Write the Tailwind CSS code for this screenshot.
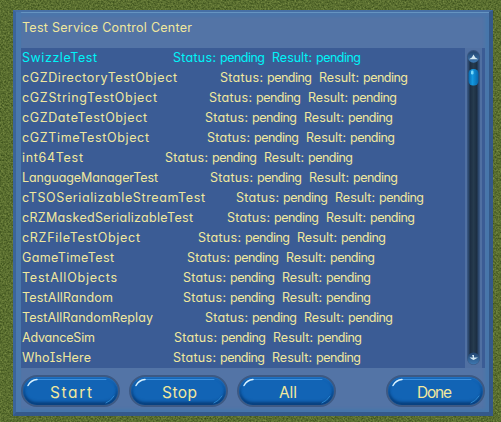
<!DOCTYPE html>
<html lang="en">
<head>
<meta charset="utf-8">
<title>Test Service Control Center</title>
<script src="https://cdn.jsdelivr.net/npm/@tailwindcss/browser@4"></script>
</head>
<body class="relative w-[501px] h-[422px] overflow-hidden bg-[#556a2e] font-['Inter','Liberation_Sans',sans-serif] text-[#f1e89d] [font-feature-settings:'cv11','cv08']">
<!-- grass -->
<svg class="absolute inset-0" width="501" height="422" aria-hidden="true">
  <defs>
    <filter id="grass" x="0" y="0" width="100%" height="100%" color-interpolation-filters="sRGB">
      <feTurbulence type="fractalNoise" baseFrequency="0.6" numOctaves="2" seed="7"/>
      <feColorMatrix values="0.36 0 0 0 0.17  0.36 0 0 0 0.25  0.24 0 0 0 0.065  0 0 0 0 1"/>
    </filter>
  </defs>
  <rect width="501" height="422" filter="url(#grass)"/>
</svg>

<main class="relative ml-[13px] pt-[10px] w-[480px]">
  <section class="w-[480px] h-[406px] bg-[#5374a6] border-t-2 border-t-[#466fa5] border-l-[3px] border-l-[#3b659b] border-r-[4px] border-r-[#34598a] border-b-[4px] border-b-[#34598a] shadow-[inset_5px_0_1px_#4a78ad,inset_0_1px_0_#6a97c2,inset_0_5px_2px_#4b75aa,inset_-4px_0_3px_#4777ab,inset_0_-3px_3px_#4777ab] flex flex-col pl-[5px]">
    <h1 class="h-[36px] pt-[6px] pl-[1px]"><svg class="block" width="200" height="20" fill="currentColor"><text x="0" y="14" font-size="12.5" textLength="170">Test Service Control Center</text></svg></h1>
    <div class="flex h-[320px] w-[464px]">
      <ul id="list" class="w-[444px] h-[320px] bg-[#3b5c95]"></ul>
      <div class="w-[17px] flex justify-center pt-[2px] bg-[#5070a2]">
        <svg width="15" height="316" viewBox="0 0 15 316">
          <defs>
            <linearGradient id="track"><stop offset="0" stop-color="#30507b"/><stop offset=".2" stop-color="#1c2e42"/><stop offset=".5" stop-color="#263b4e"/><stop offset=".8" stop-color="#1c2e42"/><stop offset="1" stop-color="#30507b"/></linearGradient>
            <linearGradient id="thumb"><stop offset="0" stop-color="#0869ae"/><stop offset=".4" stop-color="#1398df"/><stop offset="1" stop-color="#0664aa"/></linearGradient>
            <linearGradient id="ball" x2="0" y2="1"><stop offset="0" stop-color="#24456f"/><stop offset="1" stop-color="#3d77b0"/></linearGradient>
          </defs>
          <rect x="1" y="0" width="13" height="315" rx="6.5" fill="#38557f"/>
          <rect x="2" y="2" width="11" height="310" rx="5.5" fill="url(#track)"/>
          <circle cx="7.5" cy="7" r="5.8" fill="url(#ball)"/>
          <path d="M3 9.3h9L9.3 7.6 7.5 4.5 5.8 7.6z" fill="#d5e9f2"/>
          <rect x="2.5" y="19" width="10" height="16.5" rx="4.5" fill="url(#thumb)"/>
          <rect x="5" y="20.5" width="2.5" height="4" rx="1.2" fill="#79d9fa"/>
          <circle cx="7.5" cy="308.5" r="6" fill="url(#ball)"/>
          <path d="M3.500 307.500h3.500l-1-2.500h2l0 2.500h4l-3 1.800-1.500 .8-1.500-.8z" fill="#d5e9f2"/>
        </svg>
      </div>
      <div class="w-[3px] bg-[#3b5c95]"></div>
    </div>
    <footer id="buttons" class="flex pt-[7px] w-[464px]"></footer>
  </section>
</main>

<template id="button">
  <button class="relative block w-[99px] h-[32px] shrink-0 rounded-full border-2 border-[#3d5983] bg-[#1264b5] shadow-[inset_0_1px_2px_#2777c6,inset_0_-3px_3px_#083f7c,inset_-2px_0_2px_#0d559f,inset_2px_0_2px_#0d559f]">
    <svg class="block" width="95" height="28" fill="none" stroke-linecap="round">
      <path d="M13 2.500H83" stroke="#3e91de" stroke-width="1"/>
      <path d="M5 8.500Q8 3 14 2.500" stroke="#d8f2ff" stroke-width="1.500"/>
      <path d="M83 26Q88 24 91 19" stroke="#2a86d0" stroke-width="1"/>
      <text y="20.500" font-size="15.500" fill="#f1e89d"></text>
    </svg>
  </button>
</template>

<script>
const rows = [
  ["SwizzleTest",75,173],["cGZDirectoryTestObject",155,220],["cGZStringTestObject",135,209],
  ["cGZDateTestObject",125,205],["cGZTimeTestObject",127,207],["int64Test",61,165],
  ["LanguageManagerTest",136,210],["cTSOSerializableStreamTest",183,236],["cRZMaskedSerializableTest",171,227],
  ["cRZFileTestObject",118,198],["GameTimeTest",92,187],["TestAllObjects",95,183],
  ["TestAllRandom",91,183],["TestAllRandomReplay",131,205],["AdvanceSim",73,174],["WhoIsHere",69,173]
];
const list = document.getElementById("list");
rows.forEach(([name, width, start], i) => {
  const li = document.createElement("li");
  li.className = "h-[20px] pl-[1px]" + (i === 0 ? " text-[#00f4f8]" : "");
  const x = start - 22;
  const word = (text, left, w) => `<text x="${left}" y="14" textLength="${w}">${text}</text>`;
  li.innerHTML = `<svg class="block" width="440" height="20" fill="currentColor" font-size="12.5">`
    + word(name, 0, width) + word("Status:", x, 43) + word("pending", x + 47, 45)
    + word("Result:", x + 99, 40) + word("pending", x + 143, 45) + `</svg>`;
  list.append(li);
});
[["Start",42,27,9],["Stop",35,31,9],["All",18,40,50],["Done",35,29,0]].forEach(([label, width, x, gap]) => {
  const b = document.getElementById("button").content.firstElementChild.cloneNode(true);
  const t = b.querySelector("text");
  t.textContent = label;
  t.setAttribute("x", x);
  t.setAttribute("textLength", width);
  b.style.marginRight = gap + "px";
  document.getElementById("buttons").append(b);
});
</script>
</body>
</html>
